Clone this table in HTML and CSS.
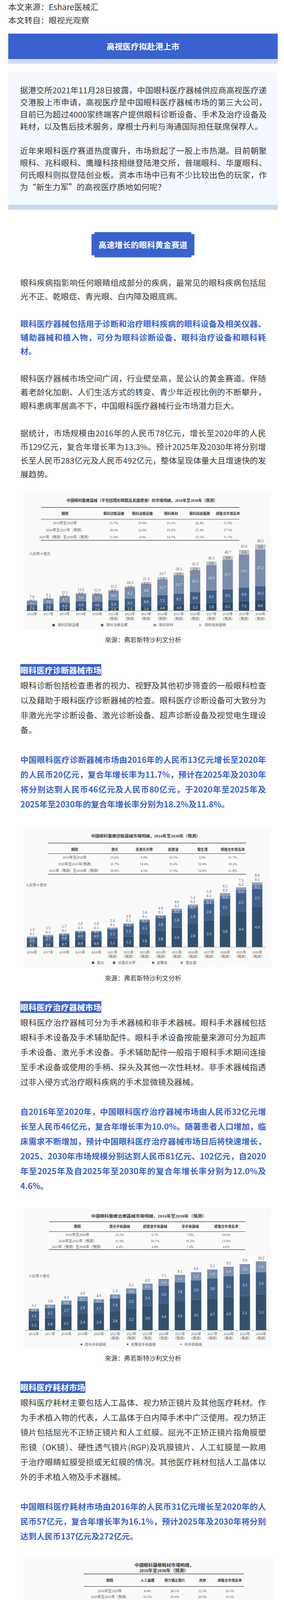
FILE: index.html
```html
<!DOCTYPE html>
<html lang="zh-CN">
<head>
<meta charset="utf-8">
<title>高视医疗拟赴港上市</title>
<link rel="stylesheet" href="styles.css">
</head>
<body>
<main class="page">
  <p class="meta">本文来源：Eshare医械汇</p>
  <p class="meta">本文转自：眼视光观察</p>

  <header class="banner"><h1 class="banner__title">高视医疗拟赴港上市</h1></header>

  <section class="intro">
    <p>据港交所2021年11月28日披露，中国眼科医疗器械供应商高视医疗递交港股上市申请，高视医疗是中国眼科医疗器械市场的第三大公司，目前已为超过4000家终端客户提供眼科诊断设备、手术及治疗设备及耗材，以及售后技术服务，摩根士丹利与海通国际担任联席保荐人。</p>
    <p>近年来眼科医疗赛道热度骤升，市场掀起了一股上市热潮。目前朝聚眼科、兆科眼科、鹰瞳科技相继登陆港交所，普瑞眼科、华厦眼科、何氏眼科则拟登陆创业板。资本市场中已有不少比较出色的玩家，作为“新生力军”的高视医疗质地如何呢？</p>
  </section>

  <div class="badge-row badge-row--1"><h2 class="badge">高速增长的眼科黄金赛道</h2></div>

  <section class="text text--tight text--s1">
    <p>眼科疾病指影响任何眼睛组成部分的疾病，最常见的眼科疾病包括屈光不正、乾眼症、青光眼、白内障及眼底病。</p>
    <p class="em">眼科医疗器械包括用于诊断和治疗眼科疾病的眼科设备及相关仪器、辅助器械和植入物，可分为眼科诊断设备、眼科治疗设备和眼科耗材。</p>
    <p>眼科医疗器械市场空间广阔，行业壁垒高，是公认的黄金赛道。伴随着老龄化加剧、人们生活方式的转变、青少年近视比例的不断攀升，眼科患病率居高不下，中国眼科医疗器械行业市场潜力巨大。</p>
    <p>据统计，市场规模由2016年的人民币78亿元，增长至2020年的人民币129亿元，复合年增长率为13.3%。预计2025年及2030年将分别增长至人民币283亿元及人民币492亿元，整体呈现体量大且增速快的发展趋势。</p>
  </section>

  <figure class="chart chart--1"><svg id="chart1" class="chart__svg" width="689" height="362"></svg></figure>
  <p class="caption caption--1">來源：弗若斯特沙利文分析</p>

  <section class="text text--s2">
    <h3 class="tag"><span class="tag__text">眼科医疗诊断器械市场</span></h3>
    <p>眼科诊断包括检查患者的视力、视野及其他初步筛查的一般眼科检查以及藉助于眼科医疗诊断器械的检查。眼科医疗诊断设备可大致分为非激光光学诊断设备、激光诊断设备、超声诊断设备及视觉电生理设备。</p>
    <p class="em">中国眼科医疗诊断器械市场由2016年的人民币13亿元增长至2020年的人民币20亿元，复合年增长率为11.7%，预计在2025年及2030年将分别达到人民币46亿元及人民币80亿元，于2020年至2025年及2025年至2030年的复合年增长率分别为18.2%及11.8%。</p>
  </section>

  <figure class="chart chart--2"><svg id="chart2" class="chart__svg" width="689" height="366"></svg></figure>
  <p class="caption caption--2">來源：弗若斯特沙利文分析</p>

  <section class="text text--s3">
    <h3 class="tag"><span class="tag__text">眼科医疗治疗器械市场</span></h3>
    <p>眼科医疗治疗器械可分为手术器械和非手术器械。眼科手术器械包括眼科手术设备及手术辅助配件。眼科手术设备按能量来源可分为超声手术设备、激光手术设备。手术辅助配件一般指于眼科手术期间连接至手术设备或使用的手柄、探头及其他一次性耗材。非手术器械指透过非入侵方式治疗眼科疾病的手术显微镜及器械。</p>
    <p class="em">自2016年至2020年，中国眼科医疗治疗器械市场由人民币32亿元增长至人民币46亿元，复合年增长率为10.0%。随著患者人口增加，临床需求不断增加，预计中国眼科医疗治疗器械市场日后将快速增长，2025、2030年市场规模分别达到人民币81亿元、102亿元，自2020年至2025年及自2025年至2030年的复合年增长率分别为12.0%及4.6%。</p>
  </section>

  <figure class="chart chart--3"><svg id="chart3" class="chart__svg" width="689" height="368"></svg></figure>
  <p class="caption caption--3">來源：弗若斯特沙利文分析</p>

  <section class="text text--s4">
    <h3 class="tag"><span class="tag__text">眼科医疗耗材市场</span></h3>
    <p>眼科医疗耗材主要包括人工晶体、视力矫正镜片及其他医疗耗材。作为手术植入物的代表，人工晶体于白内障手术中广泛使用。视力矫正镜片包括屈光不正矫正镜片和人工虹膜。屈光不正矫正镜片指角膜塑形镜（OK镜）、硬性透气镜片(RGP)及巩膜镜片、人工虹膜是一款用于治疗眼睛虹膜受损或无虹膜的情况。其他医疗耗材包括人工晶体以外的手术植入物及手术器械。</p>
    <p class="em">中国眼科医疗耗材市场由2016年的人民币31亿元增长至2020年的人民币57亿元，复合年增长率为16.1%，预计2025年及2030年将分别达到人民币137亿元及272亿元。</p>
  </section>

  <figure class="chart chart--4"><svg id="chart4" class="chart__svg" width="689" height="356"></svg></figure>
  <p class="caption caption--4">來源：弗若斯特沙利文分析</p>

  <div class="badge-row badge-row--2"><h2 class="badge badge--short">营收稳步增长，但净利润亮红灯</h2></div>

  <section class="text text--s5">
    <p>市场规模潜力巨大，高视医疗凭借自身优势在不断扩展的市场中也建立了领先地位。<strong class="em">按2020年收入计算，高视医疗在中国市场国内外眼科医疗器械供应商中眼科总收入排名第三，其中眼科医疗诊断器械第一、眼科医疗器械技术服务第二。</strong></p>
    <p>从收入来看，2018年、2019年、2020年以及2021年上半年，高视医疗收入分别约为9.26亿、11.06亿、9.62亿及5.79亿，同期的毛利分别为3.79亿、4.63亿、4.36亿及2.70亿。相应的毛利率为40.9%、41.9%、45.3%及46.6%。<strong class="em">高视医疗在招股书中称，收入及利润于业绩记录期保持稳定，毛利率稳步增长。</strong></p>
    <p><strong class="em">营收增长但净利润表现不佳，仅2020年度及同年上半年实现净利润为正。</strong>2018年至2020年，高视医疗净利润分别为-3860.6万元、-3803.6万元、9853.8万元，2020年上半年净利润为1292万元，2021年上半年由盈转亏，为-3458.5万元。</p>
  </section>

  <div class="badge-row badge-row--3"><h2 class="badge badge--tall">营收高度依赖经销产品，自主研发加速进行</h2></div>

  <section class="text text--s6">
    <p><strong class="em">从收入结构上看，高视医疗绝大部分收入来自代理销售眼科医疗器械。</strong>高视医疗通过订立供应及经销协议，向品牌合作伙伴采购眼科医疗器械，转售给其管理的经销商，从该产品销售中产生收入。</p>
    <p>2018年、2019年、2020年以及2021年上半年销售经销产品营收分别为人民币8.35亿元、人民币9.86亿元、人民币7.76亿元及人民币3.49亿元，分别占销售产品收入的99.3%、98.9%、94.8%及70.9%。</p>
    <p>供货商的重要性不言而喻，高视医疗在风险提示中也提到这种情况预期将继续，可能特别容易受到对任何该等产品的销量、定价水平或盈利能力造成重大不利影响的因素的影响。</p>
    <p class="em">为了摆脱对代理产品的高度依赖，高视医疗不断增加研发投入，积极开发新的自有产品，努力涵盖所有主要的眼科产品线。</p>
    <p>高视医疗在招股书中表示，IPO募集所得资金净额将主要用于改善研发能力并加速商业化专利，改善产能并增强制造能力。对于一家医疗器械公司来说，不断研发，构建技术壁垒才能让企业获得持续强大的竞争力。</p>
    <p>随着行业需求爆发、国内政策支持，技术驱动成长多重利好加持，同时借助登陆资本市场这一契机，高视医疗未来或将加快放量节奏，未来表现如何，我们将持续关注。</p>
  </section>

  <footer class="footer">
    <p>来源 | Eshare医械汇</p>
    <p>原文名 | 眼科黄金赛道迎“新生力军”，中国第三大眼科器械公司“高视医疗”递交招股书</p>
    <p>值班编辑 | 李静&nbsp;&nbsp;总编 | 张玲</p>
    <p>合作/投稿邮箱 | Lynnzhang326@126.com</p>
  </footer>
</main>
<script src="script.js"></script>
</body>
</html>
```

FILE: styles.css
```css
* { box-sizing: border-box; }
html { background: #fff; }
body {
  margin: 0;
  color: #3a3a3a;
  font-family: "Noto Sans CJK SC", "Noto Sans", sans-serif;
  font-size: 20.7px;
}
.page { width: 689px; margin-left: 21px; padding-bottom: 8px; }

.meta { margin: 0; line-height: 34px; }

.banner {
  margin-top: 17.5px;
  height: 77.5px;
  background: #3862cd;
  border-bottom: 12.5px solid #cfdbf6;
  display: flex;
  align-items: center;
  justify-content: center;
}
.banner__title { margin: 0; color: #fff; font-size: 20.7px; font-weight: 700; line-height: 1; }

.intro {
  margin-top: 20.5px;
  background: #f5f8fe;
  padding: 31px 28px 30px 30px;
  border-bottom: 13px solid #c9d7f4;
}
.intro p { margin: 0; line-height: 31.1px; text-align: justify; }
.intro p + p { margin-top: 31.1px; }

.badge-row { display: flex; justify-content: center; }
.badge {
  margin: 0;
  padding: 0 18px;
  background: #3862cd;
  color: #fff;
  font-size: 20.7px;
  font-weight: 700;
  line-height: 64.4px;
  clip-path: polygon(8px 0, calc(100% - 8px) 0, calc(100% - 8px) 5px, 100% 5px, 100% calc(100% - 5px), calc(100% - 8px) calc(100% - 5px), calc(100% - 8px) 100%, 8px 100%, 8px calc(100% - 5px), 0 calc(100% - 5px), 0 5px, 8px 5px);
}
.badge--short { line-height: 53.3px; }
.badge--tall { line-height: 65px; }
.badge-row--1 { margin-top: 57px; }
.badge-row--2 { margin-top: 91.1px; }
.badge-row--3 { margin-top: 45.1px; }

.text { padding: 0 30px 0 31px; }
.text p { margin: 0; text-align: justify; line-height: 38px; }
.text p + p { margin-top: 38px; }
.text--tight p { line-height: 35px; }
.text--tight p + p { margin-top: 35px; }
.text--s1 { margin-top: 47.2px; }
.text--s2 { margin-top: 46px; }
.text--s3 { margin-top: 43px; }
.text--s4 { margin-top: 43px; }
.text--s5 { margin-top: 48.5px; }
.text--s6 { margin-top: 55.4px; }

.em { color: #3b63cf; font-weight: 700; }

.tag { margin: 0; line-height: 40px; font-size: 20.7px; font-weight: 700; }
.tag__text { background: #3b63cf; color: #fff; }

.chart { margin: 0; display: block; line-height: 1; }
.chart__svg { display: block; overflow: visible; line-height: 1; }
.chart--1 { margin-top: 19px; }
.chart--2 { margin-top: 33px; }
.chart--3 { margin-top: 31.3px; }
.chart--4 { margin-top: 29px; }

.caption { margin: 0; text-align: center; font-size: 16.3px; line-height: 24px; color: #3a3a3a; }
.caption--1 { margin-top: 13px; }
.caption--2 { margin-top: 14.7px; }
.caption--3 { margin-top: 11px; }
.caption--4 { margin-top: 14.6px; }

.footer { margin-top: 79.8px; padding: 0 30px 0 31px; }
.footer p { margin: 0; line-height: 38.75px; }

/* chart drawing */
.chart__svg text {
  font-family: "Liberation Serif", "Noto Sans CJK TC", serif;
  text-anchor: middle;
  dominant-baseline: central;
}
.c-bg { fill: #fafafa; }
.c-title { font-weight: 700; fill: #3a3a3a; }
.c-head { font-size: 8.8px; font-weight: 700; fill: #3a3a3a; }
.c-cell { font-size: 8.8px; fill: #555; }
.c-unit { font-size: 9px; fill: #6a6a6a; }
.c-val { font-size: 9.6px; fill: #555; }
.c-in { font-size: 9.6px; fill: #e2e7ef; }
.c-in--dark { fill: #4a4a4a; }
.c-year { font-size: 8.8px; fill: #5a5a5a; }
.chart__svg .c-leg { font-size: 9px; fill: #6a6a6a; text-anchor: start; }
.c-rule { stroke: #7a7a7a; }
.c-axis { stroke: #a3a3a3; stroke-width: 1.2; }
```

FILE: script.js
```js
(function () {
  var NS = 'http://www.w3.org/2000/svg';
  function mk(tag, attrs, text) {
    var e = document.createElementNS(NS, tag);
    Object.keys(attrs).forEach(function (k) { e.setAttribute(k, attrs[k]); });
    if (text !== undefined) e.textContent = text;
    return e;
  }
  var YEARS = [];
  for (var yr = 2016; yr <= 2030; yr++) YEARS.push(yr + '年');

  var CHARTS = [
    {
      id: 'chart1', h: 362, bg: [40, 8, 632, 354],
      title: [{ t: '中國眼科醫療器械（不包括隱形眼鏡及其護理液）的市場明細，2016年至2030年（預測）', x: 342, y: 31.5, w: 386, s: 10 }],
      rx: [83.7, 591], rules: [[49, 2], [79.2, 1.6], [133.2, 2]],
      cols: [145, 270, 343, 416.4, 489.5, 561.6], headY: 65.4,
      head: ['期間', '眼科診斷設備', '眼科治療設備', '眼科耗材', '眼科技術服務', '總複合年增長率'],
      rowY: [89, 107, 124.6],
      rows: [
        ['2016年至2020年', '11.7%', '10.0%', '16.1%', '22.4%', '13.3%'],
        ['2020年至2025年（預測）', '18.2%', '12.0%', '19.2%', '27.4%', '17.1%'],
        ['2025年（預測）至2030年（預測）', '11.8%', '4.6%', '14.7%', '15.1%', '11.7%']
      ],
      unit: [80.5, 167.5], base: 313.9, axis: [41.8, 665.4],
      bars: { x0: 60.9, step: 41.68, w: 26.5, scale: 3.467,
        colors: ['#2f4b6b', '#3e5f88', '#7a8eab', '#c3c6cb'], labs: ['l', 'l', 'l', 'd'] },
      data: [[1.3, 3.2, 3.1, 0.2, 7.8], [1.5, 3.8, 3.6, 0.3, 9.2], [1.7, 4.4, 4.7, 0.4, 11.1], [2.0, 4.9, 5.8, 0.5, 13.2], [2.0, 4.6, 5.7, 0.6, 12.9], [2.4, 5.4, 6.9, 0.8, 15.5], [2.9, 6.2, 8.2, 1.0, 18.3], [3.4, 6.9, 9.8, 1.2, 21.4], [4.0, 7.5, 11.7, 1.6, 24.7], [4.6, 8.1, 13.7, 1.9, 28.3], [5.2, 8.6, 16.2, 2.2, 32.3], [5.9, 9.1, 18.9, 2.6, 36.5], [6.5, 9.5, 21.7, 3.0, 40.7], [7.3, 9.9, 24.5, 3.4, 45.0], [8.0, 10.2, 27.2, 3.8, 49.2]],
      xl: [322.2, 333.6],
      legend: { y: 350.3, s: 6, items: [[113, 127, '眼科診斷設備', '#2f4b6b'], [237, 251, '眼科治療設備', '#3e5f88'], [372, 386, '眼科耗材', '#7a8eab'], [487.6, 502.5, '眼科技術服務', '#c3c6cb']] }
    },
    {
      id: 'chart2', h: 366, bg: [40, 10, 632, 356],
      title: [{ t: '中國眼科醫療診斷器械市場明細，2016年至2030年（預測）', x: 351.4, y: 30.3, w: 279, s: 10 }],
      rx: [101, 608], rules: [[48.2, 2], [75.3, 1.6], [127.9, 2]],
      cols: [169.8, 272, 347.5, 422, 496.5, 573.7], headY: 64.8,
      head: ['期間', '激光', '非激光光學', '超聲波', '電生理', '總複合年增長率'],
      rowY: [84.6, 101.9, 119.2],
      rows: [
        ['2016年至2020年', '15.6%', '9.0%', '13.1%', '3.9%', '11.7%'],
        ['2020年至2025年(預測)', '21.7%', '14.4%', '19.4%', '16.9%', '18.2%'],
        ['2025年（預測）至2030年（預測）', '16.0%', '4.5%', '11.5%', '14.8%', '11.8%']
      ],
      unit: [71.5, 155.6], base: 314.8, axis: [41.8, 658],
      bars: { x0: 60.9, step: 41.11, w: 26.5, scale: 21, stack: true,
        colors: ['#33506f', '#3e6088', '#5a79a1', '#8da2be'], labs: ['l', 'l', 'l', 'l'] },
      data: [[0.5, 0.6, 0.1, 0.1, 1.3], [0.6, 0.7, 0.1, 0.1, 1.5], [0.7, 0.8, 0.1, 0.1, 1.7], [0.9, 0.9, 0.1, 0.1, 2.0], [0.9, 0.9, 0.1, 0.1, 2.0], [1.1, 1.1, 0.1, 0.1, 2.4], [1.3, 1.3, 0.2, 0.1, 2.9], [1.6, 1.5, 0.2, 0.1, 3.4], [2.0, 1.6, 0.2, 0.1, 4.0], [2.4, 1.8, 0.3, 0.2, 4.6], [2.8, 1.9, 0.3, 0.2, 5.2], [3.3, 2.0, 0.4, 0.2, 5.9], [3.8, 2.1, 0.4, 0.3, 6.5], [4.4, 2.2, 0.4, 0.3, 7.3], [4.9, 2.2, 0.5, 0.3, 8.0]],
      xl: [328, 339],
      legend: { y: 354.6, s: 6, items: [[214, 226.6, '激光', '#33506f'], [267.5, 280.5, '非激光光學', '#3e6088'], [367.5, 380, '超聲波', '#5a79a1'], [440.6, 453.6, '電生理', '#8da2be']] }
    },
    {
      id: 'chart3', h: 368, bg: [40, 8, 632, 358],
      title: [{ t: '中國眼科醫療治療器械市場明細，2016年至2030年（預測）', x: 359.3, y: 28.6, w: 295, s: 10 }],
      rx: [104.6, 606.3], rules: [[42.5, 2], [67.7, 1.6], [114.1, 2]],
      cols: [176.8, 284.7, 375.5, 465.3, 557.4], headY: 55.3,
      head: ['期間', '激光手術器械', '超聲波手術器械', '非手術器械', '總複合年增長率'],
      rowY: [76.4, 92, 106.5],
      rows: [
        ['2016年至2020年', '13.1%', '6.7%', '7.6%', '10.0%'],
        ['2020年至2025年（預測）', '11.9%', '10.7%', '16.5%', '12.0%'],
        ['2025年（預測）至2030年（預測）', '4.4%', '3.8%', '7.4%', '4.6%']
      ],
      unit: [79, 182], base: 320.5, axis: [44, 665], ticks: true,
      bars: { x0: 65.6, step: 41.48, w: 26.5, scale: 17.3,
        colors: ['#34506f', '#3e5f86', '#7d91af'], labs: ['l', 'l', 'l'] },
      data: [[1.5, 1.3, 0.4, 3.2], [1.8, 1.5, 0.5, 3.8], [2.1, 1.7, 0.6, 4.4], [2.4, 1.9, 0.7, 4.9], [2.4, 1.7, 0.5, 4.6], [2.8, 1.9, 0.6, 5.4], [3.2, 2.2, 0.8, 6.2], [3.6, 2.4, 0.9, 6.9], [4.0, 2.6, 1.0, 7.5], [4.3, 2.8, 1.1, 8.1], [4.5, 2.9, 1.2, 8.6], [4.7, 3.0, 1.3, 9.1], [4.9, 3.1, 1.4, 9.5], [5.1, 3.2, 1.5, 9.9], [5.3, 3.3, 1.6, 10.2]],
      xl: [329.8, 341.2],
      legend: { y: 356.5, s: 4, items: [[185, 195.4, '激光手術器械', '#34506f'], [303.3, 314, '超聲波手術器械', '#3e5f86'], [439.7, 450, '非手術器械', '#7d91af']] }
    },
    {
      id: 'chart4', h: 356, bg: [40, 6, 638, 350],
      title: [
        { t: '中國眼科醫療耗材市場明細，', x: 398.8, y: 26.7, w: 151.6, s: 11.5 },
        { t: '2016年至2030年（預測）', x: 397.8, y: 41.3, w: 125.6, s: 11.5 }
      ],
      rx: [193, 602.5], rules: [[49.2, 2], [81.4, 1.6], [134, 2]],
      cols: [259.6, 356, 425.7, 496.5, 566.3], headY: 65.8,
      head: ['期間', '人工晶體', '視力矯正鏡片', '其他', '總複合年增長率'],
      rowY: [92.5, 108, 124.7],
      rows: [
        ['2016年至2020年', '8.8%', '38.1%', '12.3%', '16.1%'],
        ['2020年至2025年（預測）', '10.3%', '29.4%', '20.5%', '19.2%'],
        ['2025年（預測）至2030年（預測）', '11.7%', '17.0%', '10.2%', '14.7%']
      ],
      unit: [171, 149.6], base: 309.9, axis: [41.8, 670],
      bars: { x0: 60.9, step: 41.94, w: 27, scale: 5.82,
        colors: ['#3a5777', '#4a6a91', '#8599b5'], labs: ['l', 'l', 'd'] },
      data: [[2.4, 0.6, 0.2, 3.1], [2.6, 0.8, 0.2, 3.6], [3.2, 1.2, 0.3, 4.7], [3.7, 1.7, 0.4, 5.8], [3.3, 2.1, 0.3, 5.7], [3.7, 2.8, 0.4, 6.9], [4.0, 3.7, 0.5, 8.2], [4.5, 4.7, 0.6, 9.8], [4.9, 6.0, 0.7, 11.7], [5.4, 7.5, 0.8, 13.7], [6.1, 9.2, 0.9, 16.2], [6.9, 11.0, 1.0, 18.9], [7.7, 12.9, 1.1, 21.7], [8.5, 14.7, 1.2, 24.5], [9.4, 16.5, 1.3, 27.2]],
      xl: [320.3, 331.3],
      legend: { y: 342.8, s: 6, items: [[256, 271, '人工晶體', '#3a5777'], [329, 344, '視力矯正鏡片', '#4a6a91'], [419, 436, '其他', '#8599b5']] }
    }
  ];

  function build(c) {
    var svg = document.getElementById(c.id);
    if (!svg) return;
    svg.setAttribute('viewBox', '0 0 689 ' + c.h);
    svg.setAttribute('width', '689');
    svg.setAttribute('height', String(c.h));
    function add(tag, attrs, text) { var e = mk(tag, attrs, text); svg.appendChild(e); return e; }

    add('rect', { x: c.bg[0], y: c.bg[1], width: c.bg[2], height: c.bg[3], 'class': 'c-bg' });
    c.title.forEach(function (t) {
      add('text', { x: t.x, y: t.y, 'font-size': t.s, textLength: t.w, lengthAdjust: 'spacingAndGlyphs', 'class': 'c-title' }, t.t);
    });
    c.rules.forEach(function (r) {
      add('line', { x1: c.rx[0], x2: c.rx[1], y1: r[0], y2: r[0], 'stroke-width': r[1], 'class': 'c-rule' });
    });
    c.head.forEach(function (h, i) { add('text', { x: c.cols[i], y: c.headY, 'class': 'c-head' }, h); });
    c.rows.forEach(function (row, j) {
      row.forEach(function (v, i) { add('text', { x: c.cols[i], y: c.rowY[j], 'class': 'c-cell' }, v); });
    });
    add('text', { x: c.unit[0], y: c.unit[1], 'class': 'c-unit' }, '人民幣十億元');

    var b = c.bars;
    c.data.forEach(function (d, i) {
      var cx = b.x0 + i * b.step;
      var n = d.length - 1;
      var tops = [], hs = [], cum = 0;
      for (var s = 0; s < n; s++) {
        var h = d[s] * b.scale;
        var top = c.base - cum - h;
        add('rect', { x: (cx - b.w / 2).toFixed(2), y: top.toFixed(2), width: b.w, height: h.toFixed(2), fill: b.colors[s] });
        tops.push(top); hs.push(h); cum += h;
      }
      var barTop = c.base - cum;
      for (var k = 0; k < n; k++) {
        if (b.stack && k === n - 1) {
          add('text', { x: cx, y: (barTop - 7).toFixed(2), 'class': 'c-val' }, d[k].toFixed(1));
        } else {
          add('text', { x: cx, y: (tops[k] + hs[k] / 2).toFixed(2), 'class': b.labs[k] === 'd' ? 'c-in c-in--dark' : 'c-in' }, d[k].toFixed(1));
        }
      }
      add('text', { x: cx, y: (barTop - (b.stack ? 18 : 9)).toFixed(2), 'class': 'c-val' }, d[n].toFixed(1));
      add('text', { x: cx, y: c.xl[0], 'class': 'c-year' }, YEARS[i]);
      if (i >= 5) add('text', { x: cx, y: c.xl[1], 'class': 'c-year' }, '（預測）');
    });
    add('line', { x1: c.axis[0], x2: c.axis[1], y1: c.base, y2: c.base, 'class': 'c-axis' });
    if (c.ticks) {
      for (var t = 0; t <= 15; t++) {
        var tx = (b.x0 - b.step / 2 + t * b.step).toFixed(2);
        add('line', { x1: tx, x2: tx, y1: c.base, y2: c.base + 3, 'class': 'c-axis' });
      }
    }
    c.legend.items.forEach(function (it) {
      var s = c.legend.s;
      add('rect', { x: it[0], y: c.legend.y - s / 2, width: s, height: s, fill: it[3] });
      add('text', { x: it[1], y: c.legend.y, 'class': 'c-leg' }, it[2]);
    });
  }

  CHARTS.forEach(build);
})();
```
